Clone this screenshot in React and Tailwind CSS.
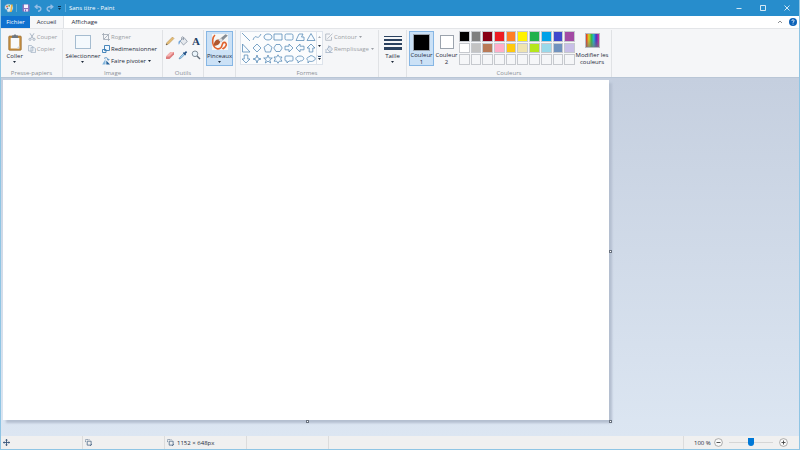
import React, { useState } from 'react'
import clsx from 'clsx'

const PALETTE = [
  '#000000', '#7f7f7f', '#880015', '#ed1c24', '#ff7f27', '#fff200', '#22b14c', '#00a2e8', '#3f48cc', '#a349a4',
  '#ffffff', '#c3c3c3', '#b97a57', '#ffaec9', '#ffc90e', '#efe4b0', '#b5e61d', '#99d9ea', '#7092be', '#c8bfe7',
  null, null, null, null, null, null, null, null, null, null,
]

const SHAPES = [
  { name: 'Ligne', d: 'M1 1L9 9' },
  { name: 'Courbe', d: 'M1 8C4 0 5 10 9 2' },
  { name: 'Ovale', d: 'M5 2C10.3 2 10.3 8 5 8S-.3 2 5 2Z' },
  { name: 'Rectangle', d: 'M1 2H9V8H1Z' },
  { name: 'Rectangle arrondi', d: 'M2.5 2H7.5Q9 2 9 3.5V6.5Q9 8 7.5 8H2.5Q1 8 1 6.5V3.5Q1 2 2.5 2Z' },
  { name: 'Polygone', d: 'M1 8.5L4 2H8L6.5 5H9V8.5Z' },
  { name: 'Triangle', d: 'M5 1.5L9 8.5H1Z' },
  { name: 'Triangle rectangle', d: 'M1.5 1L9 9H1.5Z' },
  { name: 'Losange', d: 'M5 1L9 5L5 9L1 5Z' },
  { name: 'Pentagone', d: 'M5 1L9 4.2L7.5 9H2.5L1 4.2Z' },
  { name: 'Hexagone', d: 'M3 1.5H7L9.2 5L7 8.5H3L.8 5Z' },
  { name: 'Flèche droite', d: 'M1 3.2H5V1L9 5L5 9V6.8H1Z' },
  { name: 'Flèche gauche', d: 'M9 3.2H5V1L1 5L5 9V6.8H9Z' },
  { name: 'Flèche haut', d: 'M3.2 9V5H1L5 1L9 5H6.8V9Z' },
  { name: 'Flèche bas', d: 'M3.2 1V5H1L5 9L9 5H6.8V1Z' },
  { name: 'Étoile à quatre branches', d: 'M5 1L6 4L9 5L6 6L5 9L4 6L1 5L4 4Z' },
  { name: 'Étoile à cinq branches', d: 'M5 1L6.2 4H9.3L6.8 6L7.7 9L5 7.2L2.3 9L3.2 6L.7 4H3.8Z' },
  { name: 'Étoile à six branches', d: 'M5 .8L6.3 3H9L7.6 5L9 7.2H6.3L5 9.3L3.7 7.2H1L2.4 5L1 3H3.7Z' },
  { name: 'Légende rectangulaire', d: 'M2 2H8Q9 2 9 3V6Q9 7 8 7H5L3 9V7H2Q1 7 1 6V3Q1 2 2 2Z' },
  { name: 'Légende ovale', d: 'M5 2C10 2 10 7 5 7L3 9V6.8C-1 5.5 1 2 5 2Z' },
  { name: 'Légende nuage', d: 'M2 6.5C0 5 1 3 3 3C4 1 6.5 1.5 7 2.5C10 3 9.5 6 8 6.5C6 8 4 7.5 3.5 7L2 9Z' },
]

const App = () => {
  const [tab, setTab] = useState('Accueil')
  const [slot, setSlot] = useState(1)
  const [colors, setColors] = useState({ 1: '#000000', 2: '#ffffff' })
  const [zoom, setZoom] = useState(50)

  return (
    <div className="h-screen flex flex-col overflow-hidden border-x border-b border-[#8fc5e4] bg-[#dce6f2] font-['Open_Sans','Noto_Sans',sans-serif] text-[6px] leading-[8px] text-[#1e2a3a]">
      <TitleBar />

      {/* Tabs */}
      <nav className="flex h-3 shrink-0 items-stretch bg-white pr-0.5">
        <button className="w-[29px] bg-[#0f71cf] text-white">Fichier</button>
        {['Accueil', 'Affichage'].map((name) => (
          <button
            key={name}
            onClick={() => setTab(name)}
            className={clsx(
              name === 'Accueil' ? 'w-[34px]' : 'w-[41px]',
              tab === name && 'border-r border-[#dfe2e6] bg-[#f6f7f9]'
            )}
          >
            {name}
          </button>
        ))}
        <div className="ml-auto flex items-center gap-1.5">
          <button aria-label="Réduire le ruban">
            <svg className="h-1 w-1.5" viewBox="0 0 6 4" fill="none" stroke="#8b8f94">
              <path d="M1 3L3 1L5 3" />
            </svg>
          </button>
          <button aria-label="Aide">
            <svg className="size-2" viewBox="0 0 8 8">
              <circle cx="4" cy="4" r="4" fill="#0c62b8" />
              <path d="M2.8 3C2.9 1.3 5.3 1.5 5.1 3C5 3.8 4 3.8 4 4.8M4 5.7V6.5" fill="none" stroke="#fff" strokeWidth=".9" />
            </svg>
          </button>
        </div>
      </nav>

      {/* Ribbon */}
      <div className="flex h-[49px] shrink-0 items-stretch border-t border-[#e3e5e8] bg-[#f5f6f8] pt-px">
        <Group label="Presse-papiers" className="w-[62px]">
          <LargeButton text="Coller" className="w-[26px]" icon={<ClipboardIcon />} arrow />
          <SmallButtons className="pr-1">
            <SmallButton text="Couper" icon={<CutIcon />} disabled />
            <SmallButton text="Copier" icon={<CopyIcon />} disabled />
          </SmallButtons>
        </Group>

        <Group label="Image" className="w-[100px]">
          <LargeButton text="Sélectionner" className="w-[38px]" icon={<SelectIcon />} arrow />
          <SmallButtons className="pr-1">
            <SmallButton text="Rogner" icon={<CropIcon />} disabled />
            <SmallButton text="Redimensionner" icon={<ResizeIcon />} />
            <SmallButton text="Faire pivoter" icon={<RotateIcon />} arrow />
          </SmallButtons>
        </Group>

        <Group label="Outils" className="w-[41px]">
          <Tools />
        </Group>

        <Group className="w-8">
          <LargeButton text="Pinceaux" className="w-[27px]" icon={<BrushIcon />} arrow selected />
        </Group>

        <Group label="Formes" className="w-[143px]">
          <div className="flex h-[34px] border border-[#dde3eb] bg-[#fbfcfd]">
            <div className="grid w-[75px] grid-cols-7 grid-rows-3">
              {SHAPES.map((shape) => (
                <button key={shape.name} aria-label={shape.name} className="flex items-center justify-center">
                  <svg className="size-2.5" viewBox="0 0 10 10" fill="#f6fbff" stroke="#5c8db8" strokeWidth=".8">
                    <path d={shape.d} fill={shape.name === 'Courbe' ? 'none' : undefined} />
                  </svg>
                </button>
              ))}
            </div>
            <div className="flex w-1.5 flex-col justify-around border-l border-[#dde3eb]">
              <button aria-label="Formes précédentes" className="flex justify-center"><Arrow className="rotate-180 text-[#a5abb3]" /></button>
              <button aria-label="Formes suivantes" className="flex justify-center"><Arrow /></button>
              <button aria-label="Toutes les formes" className="flex flex-col items-center border-t border-[#dde3eb]">
                <span className="mb-px h-px w-[3px] bg-[#33537a]" />
                <Arrow />
              </button>
            </div>
          </div>
          <SmallButtons className="pl-0.5">
            <SmallButton text="Contour" icon={<OutlineIcon />} disabled arrow />
            <SmallButton text="Remplissage" icon={<FillIcon />} disabled arrow />
          </SmallButtons>
        </Group>

        <Group className="w-7">
          <LargeButton
            text="Taille"
            className="w-6"
            arrow
            icon={
              <svg className="h-[18px] w-[18px]" viewBox="0 0 18 18" fill="#2b4260">
                <path d="M0 3H18V4H0ZM0 6H18V8H0ZM0 10H18V12H0ZM0 14H18V17H0Z" />
              </svg>
            }
          />
        </Group>

        <Group label="Couleurs" className="w-[205px]">
          {[1, 2].map((n) => (
            <button
              key={n}
              onClick={() => setSlot(n)}
              className={clsx(
                'flex h-[35px] w-[25px] flex-col items-center border leading-[6px]',
                slot === n ? 'border-[#86b6e4] bg-[#cbe1f6]' : 'border-transparent'
              )}
            >
              <span className="flex h-5 items-center">
                <span
                  className={clsx('border border-[#9ba3ad]', n === 1 ? 'size-[17px]' : 'size-3.5')}
                  style={{ backgroundColor: colors[n] }}
                />
              </span>
              <span className="leading-[7px]">Couleur</span>
              <span>{n}</span>
            </button>
          ))}
          <div className="grid h-[34px] w-[116px] grid-cols-10 gap-px">
            {PALETTE.map((color, i) => (
              <button
                key={i}
                aria-label={color ?? 'Emplacement libre'}
                onClick={() => color && setColors({ ...colors, [slot]: color })}
                className="border border-[#c6c9ce]"
              >
                <span className="block h-full" style={{ backgroundColor: color ?? '#f5f6f8' }} />
              </button>
            ))}
          </div>
          <button className="flex w-[34px] flex-col items-center whitespace-nowrap leading-[7px]">
            <span className="mb-1 flex h-[17px] items-end"><SpectrumIcon /></span>
            <span>Modifier les</span>
            <span>couleurs</span>
          </button>
        </Group>
      </div>

      {/* Workspace */}
      <main className="min-h-0 flex-1 border-t border-[#b9c6d6] bg-linear-to-b from-[#c5cfdf] to-[#dce6f2] pl-0.5 pt-0.5">
        <div className="relative h-[340px] w-[606px] bg-white shadow-[3px_3px_2px_#b4bfd0]">
          <Handle className="-right-[3px] top-1/2" label="Redimensionner en largeur" />
          <Handle className="-bottom-[3px] left-1/2" label="Redimensionner en hauteur" />
          <Handle className="-bottom-[3px] -right-[3px]" label="Redimensionner le dessin" />
        </div>
      </main>

      {/* Status bar */}
      <footer className="flex h-[13px] shrink-0 items-stretch bg-[#f0f0f0]">
        <StatusCell>
          <svg className="size-[7px]" viewBox="0 0 7 7" stroke="#3c587c" strokeWidth=".9" fill="none">
            <path d="M3.5 0V7M0 3.5H7M2.5 1.2H4.5M2.5 5.8H4.5M1.2 2.5V4.5M5.8 2.5V4.5" />
          </svg>
        </StatusCell>
        <StatusCell><SizeIcon /></StatusCell>
        <StatusCell><SizeIcon />1152 × 648px</StatusCell>
        <StatusCell />
        <div className="ml-auto flex items-center border-l border-[#dcdcdc] pl-2.5 pr-[11px]">
          <label htmlFor="zoom" className="w-5 whitespace-nowrap">100 %</label>
          <button aria-label="Zoom arrière" onClick={() => setZoom(Math.max(0, zoom - 10))}><ZoomIcon d="M2.5 4.5H6.5" /></button>
          <input
            id="zoom"
            type="range"
            value={zoom}
            onChange={(e) => setZoom(Number(e.target.value))}
            className="mx-1.5 h-2 w-11 appearance-none bg-transparent [&::-webkit-slider-runnable-track]:h-px [&::-webkit-slider-runnable-track]:bg-[#d6d6d6] [&::-webkit-slider-thumb]:-mt-1 [&::-webkit-slider-thumb]:h-2 [&::-webkit-slider-thumb]:w-1.5 [&::-webkit-slider-thumb]:appearance-none [&::-webkit-slider-thumb]:rounded-b-sm [&::-webkit-slider-thumb]:bg-[#0078d7]"
          />
          <button aria-label="Zoom avant" onClick={() => setZoom(Math.min(100, zoom + 10))}><ZoomIcon d="M2.5 4.5H6.5M4.5 2.5V6.5" /></button>
        </div>
      </footer>
    </div>
  )
}

const TitleBar = () => (
  <header className="flex h-4 shrink-0 items-center bg-[#278dcc] pl-[3px] text-white">
    <svg className="size-2.5" viewBox="0 0 10 10">
      <path d="M1 3C2 .5 7 .5 8.5 3C10 6 8 9 4.5 9C2.5 9 3.5 7 2.5 6.5C1 6.5 .5 5 1 3Z" fill="#d9e8ef" stroke="#7da7bd" strokeWidth=".5" />
      <circle cx="3" cy="3.5" r="1" fill="#e46b46" />
      <circle cx="5.2" cy="2.8" r=".9" fill="#59a94d" />
      <circle cx="3.6" cy="5.5" r=".8" fill="#3d73c4" />
      <path d="M8 1.5L6.8 9" stroke="#f5b73c" strokeWidth="1.5" />
    </svg>
    <span className="mx-0.5 h-2 w-px bg-[#5cabdc]" />
    <div className="ml-[3px] flex items-center gap-1">
      <button aria-label="Enregistrer">
        <svg className="size-2" viewBox="0 0 8 8">
          <path d="M.5 .5H7.5V7.5H.5Z" fill="#8d71bd" />
          <path d="M2 .5H6V4H2Z" fill="#f7f2fc" />
          <path d="M2 5H6V7.5H2Z" fill="#e5d9f2" />
          <path d="M3 5.5H4V7.5H3Z" fill="#7b62b8" />
        </svg>
      </button>
      <button aria-label="Annuler">
        <svg className="size-2" viewBox="0 0 8 8" fill="none" stroke="#93bde5" strokeWidth="1.4">
          <path d="M3.5 .8L1.2 2.8L3.5 4.8M1.5 2.8H4.5C8 2.8 7.5 7 4 7.3" />
        </svg>
      </button>
      <button aria-label="Rétablir">
        <svg className="size-2" viewBox="0 0 8 8" fill="none" stroke="#93bde5" strokeWidth="1.4">
          <path d="M4.5 .8L6.8 2.8L4.5 4.8M6.5 2.8H3.5C0 2.8 .5 7 4 7.3" />
        </svg>
      </button>
      <button aria-label="Personnaliser la barre d'outils Accès rapide" className="flex flex-col items-center gap-px text-[#0c3554]">
        <span className="h-px w-[3px] bg-[#0c3554]" />
        <Arrow />
      </button>
    </div>
    <span className="ml-1 h-2 w-px bg-[#5cabdc]" />
    <h1 className="ml-[3px]">Sans titre - Paint</h1>
    <div className="ml-auto flex">
      <WindowButton label="Réduire" d="M.5 3.5H5.5" />
      <WindowButton label="Agrandir" d="M.5 .5H5.5V5.5H.5Z" />
      <WindowButton label="Fermer" d="M.5 .5L5.5 5.5M5.5 .5L.5 5.5" />
    </div>
  </header>
)

const WindowButton = ({ label, d }) => (
  <button aria-label={label} className="flex h-4 w-6 items-center justify-center">
    <svg className="size-1.5" viewBox="0 0 6 6" fill="none" stroke="#fff" strokeWidth=".8"><path d={d} /></svg>
  </button>
)

const Group = ({ label, className, children }) => (
  <section className={clsx('flex flex-col items-center justify-between border-r border-[#e0e2e5]', className)}>
    <div className="flex h-[37px] items-start justify-center pt-px">{children}</div>
    {label && <h2 className="text-[#8a8f96]">{label}</h2>}
  </section>
)

const LargeButton = ({ text, icon, className, arrow, selected }) => (
  <button
    className={clsx(
      'flex h-[35px] flex-col items-center border',
      selected ? 'border-[#86b6e4] bg-[#cbe1f6]' : 'border-transparent',
      className
    )}
  >
    <span className="flex h-5 items-center">{icon}</span>
    <span className="whitespace-nowrap">{text}</span>
    {arrow && <Arrow className="mt-px" />}
  </button>
)

const SmallButtons = ({ className, children }) => (
  <div className={clsx('flex flex-col items-start gap-1 pt-0.5', className)}>{children}</div>
)

const SmallButton = ({ text, icon, disabled, arrow }) => (
  <button disabled={disabled} className={clsx('flex items-center gap-px whitespace-nowrap', disabled && 'text-[#9b9fa5]')}>
    {icon}
    <span>{text}</span>
    {arrow && <Arrow className="ml-px" />}
  </button>
)

const Arrow = ({ className }) => (
  <svg className={clsx('h-0.5 w-[3px]', className)} viewBox="0 0 3 2" fill="currentColor"><path d="M0 0H3L1.5 2Z" /></svg>
)

const StatusCell = ({ children }) => (
  <div className="flex w-[82px] items-center gap-[3px] border-r border-[#dcdcdc] pl-0.5">{children}</div>
)

const Handle = ({ className, label }) => (
  <button aria-label={label} className={clsx('absolute size-[3px] border border-[#69727f] bg-white', className)} />
)

const Tools = () => (
  <div className="grid grid-cols-3 gap-x-[3px] gap-y-1 pt-[5px]">
    <button aria-label="Crayon">
      <svg className="size-2.5" viewBox="0 0 10 10">
        <path d="M1 9L2 6.5L7.5 1L9 2.5L3.5 8Z" fill="#e4bd72" stroke="#b08750" strokeWidth=".5" />
        <path d="M1 9L1.6 7.4L2.6 8.4Z" fill="#454545" />
      </svg>
    </button>
    <button aria-label="Remplir">
      <svg className="size-2.5" viewBox="0 0 10 10">
        <path d="M2 5L6 1.5L9.3 5.5L5.5 9Z" fill="#e5e9ee" stroke="#7e8a99" strokeWidth=".7" />
        <path d="M5.5 4V1.8C5.5 .4 3.6 .4 3.6 1.8V4" fill="none" stroke="#7e8a99" strokeWidth=".7" />
        <path d="M3 4.5C1 4 0 5.5 .6 8.5C1.4 9 2 7 2 6Z" fill="#6fa3d8" />
      </svg>
    </button>
    <button aria-label="Texte" className="size-2.5 font-['Liberation_Serif',serif] text-[11px] leading-[10px] font-bold text-[#1f3f66]">A</button>
    <button aria-label="Gomme">
      <svg className="size-2.5" viewBox="0 0 10 10">
        <path d="M1 6.5L5.5 2H9V4.5L4.5 9H1Z" fill="#dc7c7d" />
        <path d="M1 6.5L5.5 2H9L4.5 6.5Z" fill="#f5b3b1" />
      </svg>
    </button>
    <button aria-label="Sélecteur de couleurs">
      <svg className="size-2.5" viewBox="0 0 10 10">
        <path d="M1 9L2 7L5.5 3.5L6.7 4.7L3 8.2Z" fill="#a9d2ef" stroke="#5384ad" strokeWidth=".6" />
        <path d="M4.8 3L5.8 2.2L6.5 2.5L8 1L9.2 2.2L7.7 3.8L8 4.5L7.2 5.4Z" fill="#214f84" />
      </svg>
    </button>
    <button aria-label="Loupe">
      <svg className="size-2.5" viewBox="0 0 10 10" fill="none">
        <circle cx="4" cy="3.8" r="2.8" fill="#eaf4fb" stroke="#77838f" strokeWidth=".9" />
        <path d="M6 6L9 9" stroke="#64707c" strokeWidth="1.4" />
      </svg>
    </button>
  </div>
)

const ClipboardIcon = () => (
  <svg className="h-[17px] w-3.5" viewBox="0 0 14 17">
    <rect x=".7" y="2" width="12.6" height="14.3" rx="1" fill="#c48d3e" stroke="#93662b" strokeWidth=".6" />
    <path d="M2.7 4H11.3V14.5H2.7Z" fill="#f8fafc" />
    <path d="M4 1.5H5.5C5.8 0 8.2 0 8.5 1.5H10V4H4Z" fill="#6f7780" />
    <path d="M8.5 14.5L11.3 11.7V14.5Z" fill="#cdd5de" />
  </svg>
)

const SelectIcon = () => (
  <svg className="h-3.5 w-4" viewBox="0 0 16 14">
    <path d="M.5 .5H15.5V13.5H.5Z" fill="#f4f9fd" stroke="#5580a7" strokeDasharray="1 1" />
  </svg>
)

const BrushIcon = () => (
  <svg className="h-[18px] w-[18px]" viewBox="0 0 18 18">
    <path d="M1 1H17V17H1Z" fill="#f7f7f5" />
    <path d="M4 2C1.5 4 1 9 2.5 12.5C4 16 8 17 10 14.5C11.5 12.5 11 10.5 12.5 9.5C14.5 9 16.5 11 14.5 13.5C13.5 15 12 15.5 11.5 16" fill="none" stroke="#e0632f" strokeWidth="1.6" />
    <path d="M3 10.5C3.5 7.5 6 5.5 8.5 6.8C10.5 8.5 8.5 12.5 3.5 13C3 12.3 2.7 11.5 3 10.5Z" fill="#b0582f" />
    <path d="M7.5 7L14.5 1.2L16.8 2.6L10 9.2Z" fill="#858c94" />
    <path d="M7.5 7L10 5L12 7.3L10 9.2Z" fill="#d9dde0" />
  </svg>
)

const SpectrumIcon = () => (
  <svg className="size-[15px]" viewBox="0 0 15 15">
    <defs>
      <linearGradient id="hue">
        <stop stopColor="#e52b2b" />
        <stop offset=".22" stopColor="#d8d526" />
        <stop offset=".42" stopColor="#33b94b" />
        <stop offset=".6" stopColor="#25b0d5" />
        <stop offset=".78" stopColor="#4335c5" />
        <stop offset="1" stopColor="#d52e98" />
      </linearGradient>
      <linearGradient id="shade" x2="0" y2="1">
        <stop offset=".4" stopColor="#777" stopOpacity="0" />
        <stop offset="1" stopColor="#777" stopOpacity=".7" />
      </linearGradient>
    </defs>
    <path d="M0 0H15V15H0Z" fill="#b5bbc3" />
    <path d="M1 1H14V14H1Z" fill="url(#hue)" />
    <path d="M1 1H14V14H1Z" fill="url(#shade)" />
  </svg>
)

const CutIcon = () => (
  <svg className="size-2" viewBox="0 0 8 8" fill="none" stroke="#a3b0c0" strokeWidth=".9">
    <path d="M2 .3L5.2 5.4M6 .3L2.8 5.4" />
    <circle cx="2" cy="6.3" r="1.1" />
    <circle cx="6" cy="6.3" r="1.1" />
  </svg>
)

const CopyIcon = () => (
  <svg className="size-2" viewBox="0 0 8 8" fill="#edf1f6" stroke="#9fafc2" strokeWidth=".7">
    <path d="M.5 .5H3.5L4.8 1.8V6H.5ZM3 2.3H6L7.5 3.8V7.6H3Z" />
  </svg>
)

const CropIcon = () => (
  <svg className="size-2" viewBox="0 0 8 8" fill="none" stroke="#a7afb9" strokeWidth=".9">
    <path d="M1.5 0V6.5H8M0 1.5H6.5V8M2 6L7.5 .5" />
  </svg>
)

const ResizeIcon = () => (
  <svg className="size-2" viewBox="0 0 8 8" fill="#eef7ff" stroke="#387ab3" strokeWidth=".9">
    <path d="M2.5 .5H7.5V5.5H2.5ZM.5 4.5H4V7.5H.5Z" />
  </svg>
)

const RotateIcon = () => (
  <svg className="size-2" viewBox="0 0 8 8">
    <path d="M3.5 2V7.5H.2Z" fill="#82b5dd" />
    <path d="M4.3 3.5L8 7.5H4.3Z" fill="#24619a" />
    <path d="M2 1.5C4 0 6 .8 6.3 3M5.2 2.3L6.3 3.3L7.3 2" fill="none" stroke="#397bb6" strokeWidth=".8" />
  </svg>
)

const OutlineIcon = () => (
  <svg className="size-2" viewBox="0 0 8 8" fill="none" stroke="#aab3be" strokeWidth=".8">
    <path d="M5 1H.7V7.3H6.5V4M2.3 5.8L7.5 .6" />
  </svg>
)

const FillIcon = () => (
  <svg className="size-2" viewBox="0 0 8 8" stroke="#9aabc0" strokeWidth=".7">
    <path d="M2 4L4.7 1L7.5 4L5 7Z" fill="#dfe6ee" />
    <path d="M.5 7.5H7.5M1 4V7.5M3.7 3V.5" fill="none" />
  </svg>
)

const SizeIcon = () => (
  <svg className="size-[7px]" viewBox="0 0 8 8" fill="none" stroke="#4c6786" strokeWidth=".9">
    <path d="M.5 3.5V.5H5" strokeDasharray="1 .7" />
    <path d="M2.5 2.5H7V7H2.5ZM5.5 8.2L8.2 5.5" />
  </svg>
)

const ZoomIcon = ({ d }) => (
  <svg className="size-[9px]" viewBox="0 0 9 9" fill="#fafafa" stroke="#8b8b8b" strokeWidth=".7">
    <circle cx="4.5" cy="4.5" r="3.9" />
    <path d={d} stroke="#444" strokeWidth=".9" />
  </svg>
)

export default App
